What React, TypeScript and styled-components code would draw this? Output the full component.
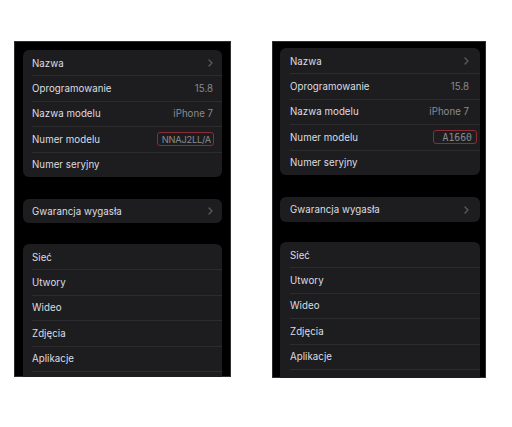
import React from 'react';
import styled, { createGlobalStyle } from 'styled-components';

const GlobalStyle = createGlobalStyle`
    html, body {
        margin: 0;
        padding: 0;
        background: #ffffff;
    }
    body {
        font-family: Inter, 'Liberation Sans', sans-serif;
    }
`;

interface Highlight {
    padL: number;
    padR: number;
    edge: number;
    mono?: boolean;
}

interface PhoneSpec {
    width: number;
    height: number;
    pad: string;
    gaps: [number, number];
    textInset: number;
    valueInset: number;
    model: string;
    highlight: Highlight;
    bottomCardHeight: number;
}

const phones: PhoneSpec[] = [
    {
        width: 217,
        height: 336,
        pad: '9px 9px 0 9px',
        gaps: [22, 21],
        textInset: 9,
        valueInset: 9,
        model: 'NNAJ2LL/A',
        highlight: { padL: 4, padR: 2, edge: -1 },
        bottomCardHeight: 24,
    },
    {
        width: 214,
        height: 337,
        pad: '7px 6px 0 8px',
        gaps: [22, 20],
        textInset: 10,
        valueInset: 11,
        model: 'A1660',
        highlight: { padL: 9, padR: 4, edge: -8, mono: true },
        bottomCardHeight: 25,
    },
];

// last list row is cut off by the screenshot edge, only its separator shows
const mediaRows = ['Sieć', 'Utwory', 'Wideo', 'Zdjęcia', 'Aplikacje', ''];

const Chevron = () => (
    <svg width="5" height="8" viewBox="0 0 5 8">
        <polyline
            points="1,1 4,4 1,7"
            fill="none"
            stroke="#5c5c60"
            strokeWidth="1.3"
            strokeLinecap="round"
            strokeLinejoin="round"
        />
    </svg>
);

const Phone: React.FC<{ spec: PhoneSpec }> = ({ spec }) => {
    const rowProps = { $inset: spec.textInset, $valueInset: spec.valueInset };
    return (
        <Screen $w={spec.width} $h={spec.height} $pad={spec.pad}>
            <Card>
                <Row {...rowProps}>
                    <RowBody {...rowProps}>
                        <Label>Nazwa</Label>
                        <Chevron />
                    </RowBody>
                </Row>
                <Row {...rowProps}>
                    <RowBody {...rowProps}>
                        <Label>Oprogramowanie</Label>
                        <Value>15.8</Value>
                    </RowBody>
                </Row>
                <Row {...rowProps}>
                    <RowBody {...rowProps}>
                        <Label>Nazwa modelu</Label>
                        <Value>iPhone 7</Value>
                    </RowBody>
                </Row>
                <Row {...rowProps}>
                    <RowBody {...rowProps}>
                        <Label>Numer modelu</Label>
                        <Marked
                            $padL={spec.highlight.padL}
                            $padR={spec.highlight.padR}
                            $edge={spec.highlight.edge}
                            $mono={spec.highlight.mono}
                        >
                            {spec.model}
                        </Marked>
                    </RowBody>
                </Row>
                <Row {...rowProps}>
                    <RowBody {...rowProps}>
                        <Label>Numer seryjny</Label>
                    </RowBody>
                </Row>
            </Card>

            <Card $top={spec.gaps[0]}>
                <Row {...rowProps} $h={spec.bottomCardHeight}>
                    <RowBody {...rowProps}>
                        <Label>Gwarancja wygasła</Label>
                        <Chevron />
                    </RowBody>
                </Row>
            </Card>

            <Card $top={spec.gaps[1]} $open>
                {mediaRows.map((name, i) => (
                    <Row key={i} {...rowProps}>
                        <RowBody {...rowProps}>{name && <Label>{name}</Label>}</RowBody>
                    </Row>
                ))}
            </Card>
        </Screen>
    );
};

export default function App() {
    return (
        <Page>
            <GlobalStyle />
            {phones.map((spec) => (
                <Phone key={spec.model} spec={spec} />
            ))}
        </Page>
    );
}

const Page = styled.div`
    width: 512px;
    height: 427px;
    box-sizing: border-box;
    padding: 41px 0 0 14px;
    display: flex;
    align-items: flex-start;
    gap: 41px;
    background: #ffffff;
    overflow: hidden;
`;

const Screen = styled.div<{ $w: number; $h: number; $pad: string }>`
    width: ${(p) => p.$w}px;
    height: ${(p) => p.$h}px;
    box-sizing: border-box;
    padding: ${(p) => p.$pad};
    background: #000000;
    box-shadow: inset 0 0 0 1px #2e2e30;
    display: flex;
    flex-direction: column;
    overflow: hidden;
`;

const Card = styled.div<{ $top?: number; $open?: boolean }>`
    margin-top: ${(p) => p.$top ?? 0}px;
    background: #1d1d1f;
    border-radius: ${(p) => (p.$open ? '6px 6px 0 0' : '6px')};
    overflow: hidden;
    flex-shrink: 0;
`;

const Row = styled.div<{ $inset: number; $valueInset: number; $h?: number }>`
    height: ${(p) => p.$h ?? 25.4}px;
    padding-left: ${(p) => p.$inset}px;
    display: flex;
    &:first-child > div {
        border-top-color: transparent;
    }
`;

const RowBody = styled.div<{ $inset: number; $valueInset: number }>`
    flex: 1;
    display: flex;
    align-items: center;
    justify-content: space-between;
    box-sizing: border-box;
    padding-right: ${(p) => p.$valueInset}px;
    border-top: 1px solid #2c2c2f;
`;

const Label = styled.span`
    font-size: 9.7px;
    color: #dedee0;
    letter-spacing: 0.05px;
`;

const Value = styled.span`
    font-size: 9.7px;
    color: #8a8a90;
`;

const Marked = styled.span<{ $padL: number; $padR: number; $edge: number; $mono?: boolean }>`
    height: 14px;
    box-sizing: border-box;
    display: flex;
    align-items: center;
    padding: 0 ${(p) => p.$padR}px 0 ${(p) => p.$padL}px;
    margin-right: ${(p) => p.$edge}px;
    border: 1px solid #8a2d36;
    border-radius: 3px;
    font-family: ${(p) => (p.$mono ? "'DejaVu Sans Mono', monospace" : "Inter, 'Liberation Sans', sans-serif")};
    font-size: ${(p) => (p.$mono ? 9.8 : 9.3)}px;
    letter-spacing: ${(p) => (p.$mono ? 0 : -0.25)}px;
    color: #8a8a90;
`;
